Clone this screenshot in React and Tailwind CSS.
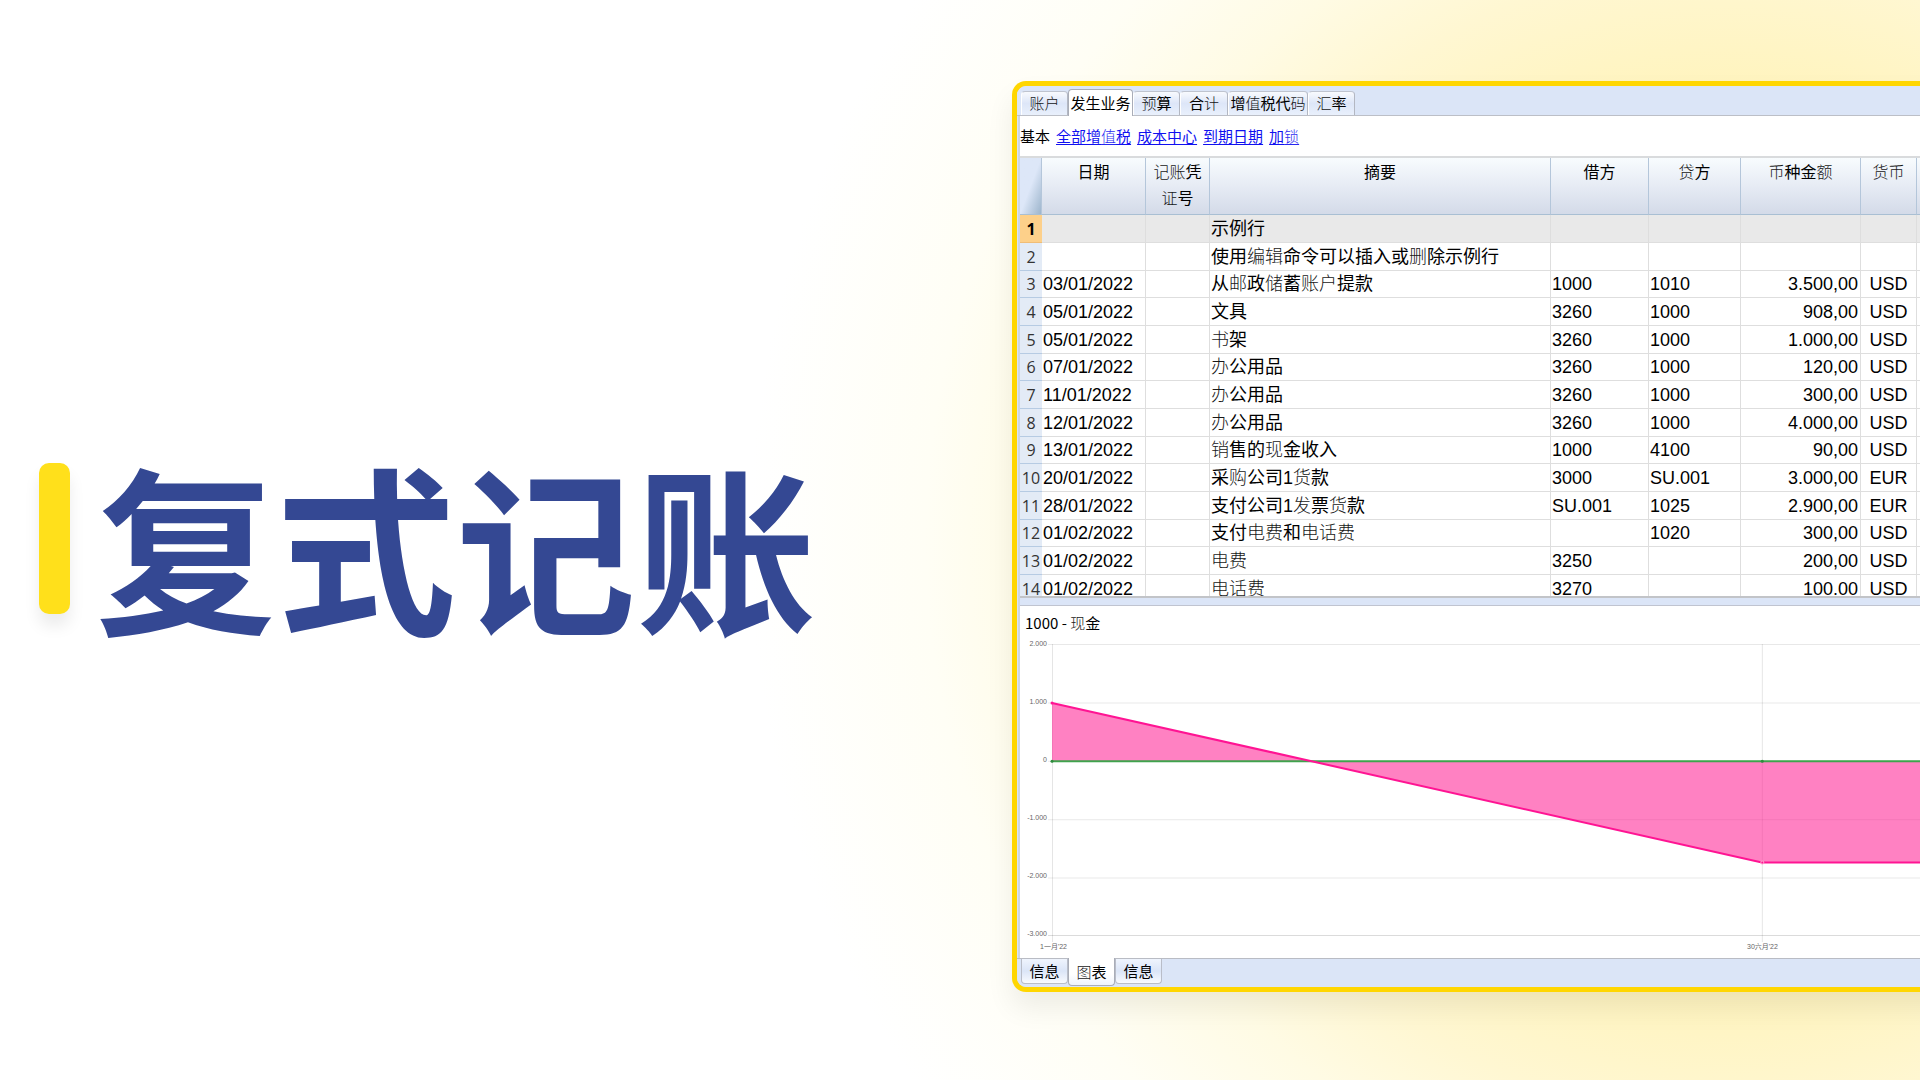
const THIN = '账户预计值码汇锁记证编辑删邮储书办销现购货费话电贷币额图';

function Mixed({ text, thin = THIN }) {
  const runs = [];
  for (const ch of text) {
    const light = thin.includes(ch);
    const last = runs[runs.length - 1];
    if (last && last.light === light) last.text += ch;
    else runs.push({ text: ch, light });
  }
  return runs.map((r, i) =>
    r.light ? (
      <span key={i} className="font-light opacity-90">{r.text}</span>
    ) : (
      <span key={i}>{r.text}</span>
    )
  );
}

const topTabs = [
  { label: '账户', size: 'w-[47px]' },
  { label: '发生业务', size: 'w-[65px]', active: true },
  { label: '预算', size: 'w-[47px]' },
  { label: '合计', size: 'w-[48px]' },
  { label: '增值税代码', size: 'w-[80px]' },
  { label: '汇率', size: 'w-[47px]' },
];

const links = ['全部增值税', '成本中心', '到期日期', '加锁'];

const rows = [
  ['', '示例行', '', '', '', ''],
  ['', '使用编辑命令可以插入或删除示例行', '', '', '', ''],
  ['03/01/2022', '从邮政储蓄账户提款', '1000', '1010', '3.500,00', 'USD'],
  ['05/01/2022', '文具', '3260', '1000', '908,00', 'USD'],
  ['05/01/2022', '书架', '3260', '1000', '1.000,00', 'USD'],
  ['07/01/2022', '办公用品', '3260', '1000', '120,00', 'USD'],
  ['11/01/2022', '办公用品', '3260', '1000', '300,00', 'USD'],
  ['12/01/2022', '办公用品', '3260', '1000', '4.000,00', 'USD'],
  ['13/01/2022', '销售的现金收入', '1000', '4100', '90,00', 'USD'],
  ['20/01/2022', '采购公司1货款', '3000', 'SU.001', '3.000,00', 'EUR'],
  ['28/01/2022', '支付公司1发票货款', 'SU.001', '1025', '2.900,00', 'EUR'],
  ['01/02/2022', '支付电费和电话费', '', '1020', '300,00', 'USD'],
  ['01/02/2022', '电费', '3250', '', '200,00', 'USD'],
  ['01/02/2022', '电话费', '3270', '', '100.00', 'USD'],
];

const yLabels = ['2.000', '1.000', '0', '-1.000', '-2.000', '-3.000'];

function TopTabs() {
  return (
    <div role="tablist" className="flex h-[30px] items-end border-b border-[#bcbfc7] bg-[#dbe5f7] pl-1 text-[15px] leading-none">
      {topTabs.map((t) => (
        <button
          key={t.label}
          role="tab"
          aria-selected={!!t.active}
          className={
            t.active
              ? `${t.size} -mb-px h-[27px] shrink-0 rounded-t-sm border border-b-0 border-[#a9adb8] bg-white text-center whitespace-nowrap`
              : `${t.size} h-6 shrink-0 rounded-t-sm border border-b-0 border-l-white border-t-[#bfc4cf] border-r-[#b3b7c2] bg-linear-to-b from-[#f8fafe] via-[#dde6f8] to-[#e9f0fc] text-center whitespace-nowrap`
          }
        >
          <Mixed text={t.label} />
        </button>
      ))}
    </div>
  );
}

function Ledger() {
  const th = 'border-r border-[#b4c6da] px-1 pt-[2px] align-top font-normal';
  const td = 'border-r border-b border-[#dedede] p-0 whitespace-nowrap';
  return (
    <div className="h-[442px] shrink-0 overflow-hidden border-t-2 border-b-2 border-t-[#d9dbdd] border-b-[#c2c4c8]">
      <table className="w-full table-fixed border-separate border-spacing-0 text-[18px] leading-5">
        <colgroup>
          <col className="w-[22px]" />
          <col className="w-[104px]" />
          <col className="w-[64px]" />
          <col />
          <col className="w-[98px]" />
          <col className="w-[92px]" />
          <col className="w-[120px]" />
          <col className="w-[56px]" />
          <col className="w-[3px]" />
        </colgroup>
        <thead>
          <tr className="h-[57px] bg-linear-to-b from-[#f8fcfe] via-[#e6ebf4] to-[#d3dae8] text-[16px] leading-[26px] [&>th]:border-b [&>th]:border-b-[#a9bfd3]">
            <th className="border-r border-[#b4c6da] bg-linear-to-br from-[#dde7f8] from-50% to-[#9db5cc]" aria-label="#" />
            <th className={th}>日期</th>
            <th className={th}><Mixed text="记账凭" /><br /><Mixed text="证号" /></th>
            <th className={th}>摘要</th>
            <th className={th}>借方</th>
            <th className={th}><Mixed text="贷方" /></th>
            <th className={th}><Mixed text="币种金额" /></th>
            <th className={th}><Mixed text="货币" /></th>
            <th className="p-0" />
          </tr>
        </thead>
        <tbody>
          {rows.map((r, i) => (
            <tr key={i} className={i === 0 ? 'h-7 bg-[#e9e9e9]' : 'h-7 nth-[3n]:h-[27px]'}>
              <th
                scope="row"
                className={
                  i === 0
                    ? 'border-b border-[#f0bd77] bg-[#fdd08a] p-0 text-center font-["Open_Sans"] text-[16px] font-bold'
                    : 'border-b border-[#b6cbe3] bg-[#e3ebf6] p-0 text-center font-["Open_Sans"] text-[16px] font-normal text-[#333]'
                }
              >
                {i + 1}
              </th>
              <td className={`${td} pl-px`}>{r[0]}</td>
              <td className={td} />
              <td className={`${td} pl-px`}>
                <Mixed text={r[1]} thin={i === 10 ? THIN + '发' : THIN} />
              </td>
              <td className={`${td} pl-px`}>{r[2]}</td>
              <td className={`${td} pl-px`}>{r[3]}</td>
              <td className={`${td} pr-[2px] text-right`}>{r[4]}</td>
              <td className={`${td} text-center`}>{r[5]}</td>
              <td className="border-b border-[#dedede] p-0" />
            </tr>
          ))}
        </tbody>
      </table>
    </div>
  );
}

function Chart() {
  return (
    <section className="flex flex-1 flex-col bg-white">
      <h2 className='pt-[7px] pl-[5px] font-["Noto_Sans_CJK_SC"] text-[15px] leading-5'>
        1000 - <Mixed text="现金" />
      </h2>
      <div className="mt-[7px] flex flex-1 text-[7px] leading-2 text-[#666]">
        <div className="flex w-7 flex-col justify-between pb-5 pr-px text-right">
          {yLabels.map((l) => (
            <span key={l}>{l}</span>
          ))}
        </div>
        <div className="flex min-w-0 flex-1 flex-col pt-1">
          <svg className="min-h-[296px] w-full flex-1" viewBox="0 0 871 296" preserveAspectRatio="none" aria-label="1000 - 现金">
            {[1, 59, 117, 175, 233, 290].map((y) => (
              <line key={y} x1="0" x2="871" y1={y - 0.5} y2={y - 0.5} stroke="#000" strokeOpacity={y === 290 ? 0.14 : 0.09} />
            ))}
            <path d="M4.500 0V296M713.500 0V296" stroke="#000" strokeOpacity=".1" />
            <path d="M4 58.500L264 116.500H4ZM264 116.500L713 217H871V116.500Z" fill="#ff1a90" fillOpacity=".55" />
            <path d="M4 116.500H871" stroke="#3fa34d" strokeWidth="2" />
            <path d="M4 58.500L713 217H871" fill="none" stroke="#ff1493" strokeWidth="2" />
            <circle cx="4" cy="58.500" r="1.500" fill="#ff1493" />
            <circle cx="4" cy="116.500" r="1.500" fill="#2e8b3d" />
            <circle cx="713.500" cy="116.500" r="1.500" fill="#2e8b3d" />
            <circle cx="713.500" cy="217" r="1.500" fill="#ff1493" stroke="#ff9dcc" />
          </svg>
          <div className="flex h-4 pt-px">
            <span className="-ml-2 w-[707px] whitespace-nowrap">1一月'22</span>
            <span className="whitespace-nowrap">30六月'22</span>
          </div>
        </div>
      </div>
    </section>
  );
}

function BottomTabs() {
  const idle =
    'h-[25px] w-[47px] rounded-b-sm border border-t-0 border-[#b9bdc8] bg-linear-to-b from-[#eff4fd] via-[#dbe5f7] to-[#f8fafe]';
  return (
    <div role="tablist" className="flex h-[29px] items-start border-t border-[#b9bcc4] bg-[#dbe5f7] pl-1 text-[15px] leading-none">
      <button role="tab" className={idle}>信息</button>
      <button role="tab" aria-selected="true" className="-mt-px h-[28px] w-[47px] rounded-b-sm border border-t-0 border-[#a9adb8] bg-linear-to-b from-white from-60% to-[#eef3fc] pt-px">
        <Mixed text="图表" />
      </button>
      <button role="tab" className={idle}>信息</button>
    </div>
  );
}

export default function App() {
  return (
    <main className='grid min-h-screen grid-cols-[253fr_227fr] overflow-hidden bg-white bg-[radial-gradient(circle_51vw_at_90%_50%,#fff0a6_0%,#fff4be_46%,#fff7d2_59%,#fffbe4_69%,#fffef5_82%,#ffffff_100%)] pt-[81px] pb-[88px] font-["Liberation_Sans","Noto_Sans_CJK_SC",sans-serif] text-black'>
      <header className="flex items-center gap-[26px] pt-3 pl-[39px]">
        <span className="mb-[8px] h-[151px] w-[31px] shrink-0 rounded-[10px] bg-[#ffe01b] shadow-[0_12px_16px_rgba(0,0,0,0.08)]" />
        <h1 className='pt-px font-["Noto_Sans_CJK_SC",sans-serif] text-[180px] leading-none font-bold whitespace-nowrap text-[#344893]'>复式记账</h1>
      </header>
      <section className="-mr-12 flex min-w-0 flex-col overflow-hidden rounded-l-[14px] border-5 border-r-0 border-[#ffd600] bg-[#dbe5f7] pr-12 shadow-[0_16px_28px_rgba(0,0,0,0.07)]">
        <TopTabs />
        <div className="ml-px flex flex-1 flex-col border-l-2 border-[#ccd5e6] bg-white">
          <nav className="flex h-[40px] items-center gap-[6px] pt-px text-[15px] leading-5">
            <span>基本</span>
            {links.map((l) => (
              <a key={l} href="#" className="text-[#1010f0] underline underline-offset-2">
                <Mixed text={l} />
              </a>
            ))}
          </nav>
          <Ledger />
          <div className="h-2 border-b border-[#c0c4d0] bg-[#dbe5f7]" />
          <Chart />
        </div>
        <BottomTabs />
      </section>
    </main>
  );
}
